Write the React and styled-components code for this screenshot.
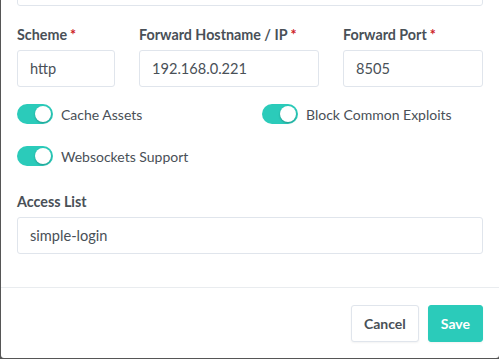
import React from "react";
import styled, { createGlobalStyle } from "styled-components";

const Global = createGlobalStyle`
  html, body { margin: 0; padding: 0; background: #565656; }
  body { font-family: Lato, "Noto Sans", sans-serif; -webkit-font-smoothing: antialiased; }
  * { box-sizing: border-box; }
`;

const Modal = styled.div`
  margin-left: 1px;
  width: 498px;
  height: 358px;
  background: #fff;
  border-bottom-left-radius: 3px;
  border-bottom-right-radius: 3px;
  overflow: hidden;
  display: flex;
  flex-direction: column;
`;

const Body = styled.div`
  padding: 0 16px 33px 16px;
  display: flex;
  flex-direction: column;
`;

const Input = styled.div`
  height: 37px;
  border: 1px solid #e0e5ec;
  border-radius: 3px;
  padding: 0 12px;
  display: flex;
  align-items: center;
  font-size: 14.6px;
  color: #495057;
  background: #fff;
`;

const TopCut = styled(Input)`
  margin-top: -31px;
`;

const Row3 = styled.div`
  display: grid;
  grid-template-columns: 98px 180px 1fr;
  column-gap: 24px;
  margin-top: 18px;
`;

const Field = styled.div`
  display: flex;
  flex-direction: column;
`;

const Label = styled.label`
  display: block;
  font-size: 14.3px;
  font-weight: 700;
  line-height: 21px;
  color: #495057;
  margin-bottom: 5px;
  white-space: nowrap;
`;

const Req = styled.span`
  color: #cd201f;
  margin-left: 3px;
`;

const SwitchGrid = styled.div`
  display: grid;
  grid-template-columns: 221px 1fr;
  column-gap: 24px;
  row-gap: 20px;
  margin-top: 16px;
`;

const SwitchLabel = styled.label`
  display: flex;
  align-items: center;
  height: 22px;
  font-size: 14px;
  color: #495057;
  gap: 8px;
`;

const Track = styled.span`
  position: relative;
  width: 36px;
  height: 20px;
  border-radius: 10px;
  background: #2bcbba;
  flex: none;
`;

const Knob = styled.span`
  position: absolute;
  top: 2px;
  right: 2px;
  width: 16px;
  height: 16px;
  border-radius: 50%;
  background: #fff;
  box-shadow: 0 1px 2px rgba(0, 0, 0, 0.25);
`;

const AccessGroup = styled.div`
  margin-top: 24px;
  display: flex;
  flex-direction: column;
`;

const Footer = styled.div`
  border-top: 1px solid #e9ecef;
  padding: 17px 16px 16px;
  display: flex;
  justify-content: flex-end;
  gap: 9px;
`;

const Button = styled.button`
  height: 37px;
  padding: 0 12px;
  border-radius: 3px;
  font-family: inherit;
  font-size: 14px;
  font-weight: 700;
  border: 1px solid ${p => (p.$primary ? "#2bcbba" : "#e0e5ec")};
  background: ${p => (p.$primary ? "#2bcbba" : "#fff")};
  color: ${p => (p.$primary ? "#fff" : "#495057")};
  box-shadow: 0 1px 2px rgba(0, 0, 0, 0.05);
`;

const Switch = ({ children }) => (
  <SwitchLabel>
    <Track>
      <Knob />
    </Track>
    {children}
  </SwitchLabel>
);

export default function App() {
  return (
    <>
      <Global />
      <Modal>
        <Body>
          <TopCut />
          <Row3>
            <Field>
              <Label>
                Scheme<Req>*</Req>
              </Label>
              <Input>http</Input>
            </Field>
            <Field>
              <Label>
                Forward Hostname / IP<Req>*</Req>
              </Label>
              <Input>192.168.0.221</Input>
            </Field>
            <Field>
              <Label>
                Forward Port<Req>*</Req>
              </Label>
              <Input>8505</Input>
            </Field>
          </Row3>
          <SwitchGrid>
            <Switch>Cache Assets</Switch>
            <Switch>Block Common Exploits</Switch>
            <Switch>Websockets Support</Switch>
          </SwitchGrid>
          <AccessGroup>
            <Label>Access List</Label>
            <Input>simple-login</Input>
          </AccessGroup>
        </Body>
        <Footer>
          <Button>Cancel</Button>
          <Button $primary>Save</Button>
        </Footer>
      </Modal>
    </>
  );
}
